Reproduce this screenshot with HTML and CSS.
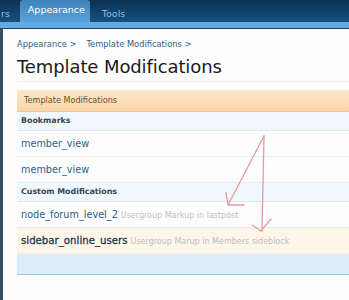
FILE: index.html
```html
<!DOCTYPE html>
<html>
<head>
<meta charset="utf-8">
<link rel="stylesheet" href="styles.css">
</head>
<body>
<div class="topbar">
  <nav class="tabs">
    <span class="tab cut">rs</span>
    <span class="tab active">Appearance</span>
    <span class="tab">Tools</span>
  </nav>
  <div class="band"></div>
</div>
<div class="page">
  <div class="crumbs"><span>Appearance &gt;</span><span>Template Modifications &gt;</span></div>
  <h1 class="title">Template Modifications</h1>
  <div class="rule"></div>
  <div class="list">
    <div class="head">Template Modifications</div>
    <div class="sub">Bookmarks</div>
    <div class="row"><span class="name">member_view</span></div>
    <div class="row"><span class="name">member_view</span></div>
    <div class="sub">Custom Modifications</div>
    <div class="row"><span class="name">node_forum_level_2</span><span class="desc">Usergroup Markup in lastpost</span></div>
    <div class="row hl"><span class="name dark">sidebar_online_users</span><span class="desc">Usergroup Marup in Members sideblock</span></div>
    <div class="foot"></div>
  </div>
  <svg class="arrows" width="349" height="300" viewBox="0 0 349 300">
    <g fill="none" stroke="#e49c9c" stroke-width="1.3" stroke-linecap="round">
      <path d="M264 136 L228 205 M226 193 L228 205 L244 205"/>
      <path d="M264 136 L262 231 M252 225 L261 231 L271 219"/>
    </g>
  </svg>
</div>
</body>
</html>
```
FILE: styles.css
```css
html, body { margin: 0; padding: 0; }
body {
  background: #f9fafd;
  font-family: "DejaVu Sans", Verdana, sans-serif;
  width: 349px;
  height: 300px;
  overflow: hidden;
  position: relative;
}
.topbar {
  background: linear-gradient(#0b3152, #1b5a8c);
  height: 29px;
}
.tabs {
  display: flex;
  align-items: flex-end;
  height: 22px;
  padding-top: 6px;
  box-sizing: border-box;
}
.tab {
  font-size: 9.5px;
  color: #8fbde2;
  padding: 0 10px;
  line-height: 16px;
}
.tab.cut { margin-left: -9px; padding-right: 10px; }
.tab.active {
  background: linear-gradient(#3f82bd, #5aa2dc);
  color: #ffffff;
  border-radius: 3px 3px 0 0;
  padding: 0 8px;
  width: 54px;
  height: 22px;
  line-height: 20px;
  margin-top: -6px;
  margin-right: 2px;
}
.band {
  height: 6px;
  background: #62aae3;
  border-bottom: 1px solid #2a4458;
}
.page {
  border-left: 3px solid #37505f;
  background: #fdfdfe;
  padding-left: 14px;
  height: 271px;
}
.crumbs {
  padding-top: 10px;
  font-size: 8.3px;
  color: #2b5f86;
  display: flex;
  gap: 10px;
  height: 10px;
  line-height: 10px;
}
.title {
  margin: 7px 0 0 0;
  font-size: 18px;
  font-weight: normal;
  color: #1a1a1a;
  line-height: 22px;
  letter-spacing: -0.1px;
}
.rule {
  margin-top: 3px;
  height: 1px;
  background: #eef0f3;
}
.list { margin-top: 8px; }
.head {
  height: 21px;
  line-height: 21px;
  background: linear-gradient(#fce7cb, #f9d6a9);
  border-bottom: 1px solid #f3c78f;
  font-size: 8.1px;
  color: #6e4e2c;
  padding-left: 7px;
}
.sub {
  height: 18px;
  line-height: 18px;
  background: #f1f8fd;
  border-bottom: 1px solid #d8e8f4;
  font-size: 7.9px;
  font-weight: bold;
  color: #3a4654;
  padding-left: 4px;
}
.row {
  height: 25px;
  line-height: 25px;
  border-bottom: 1px solid #e6eef5;
  padding-left: 4px;
  display: flex;
  align-items: baseline;
  gap: 3px;
  white-space: nowrap;
}
.row.hl { background: #fff6ea; border-bottom-color: #fbefe0; }
.name { font-size: 9.7px; color: #2b5d8c; }
.name.dark { color: #1d3852; font-size: 10.2px; -webkit-text-stroke: 0.3px #1d3852; }
.desc { font-size: 8px; color: #bdbdbd; }
.foot {
  height: 20px;
  background: #dcedfa;
  border-bottom: 1px solid #aac6dd;
}
.arrows {
  position: absolute;
  left: 0;
  top: 0;
  pointer-events: none;
}
```
